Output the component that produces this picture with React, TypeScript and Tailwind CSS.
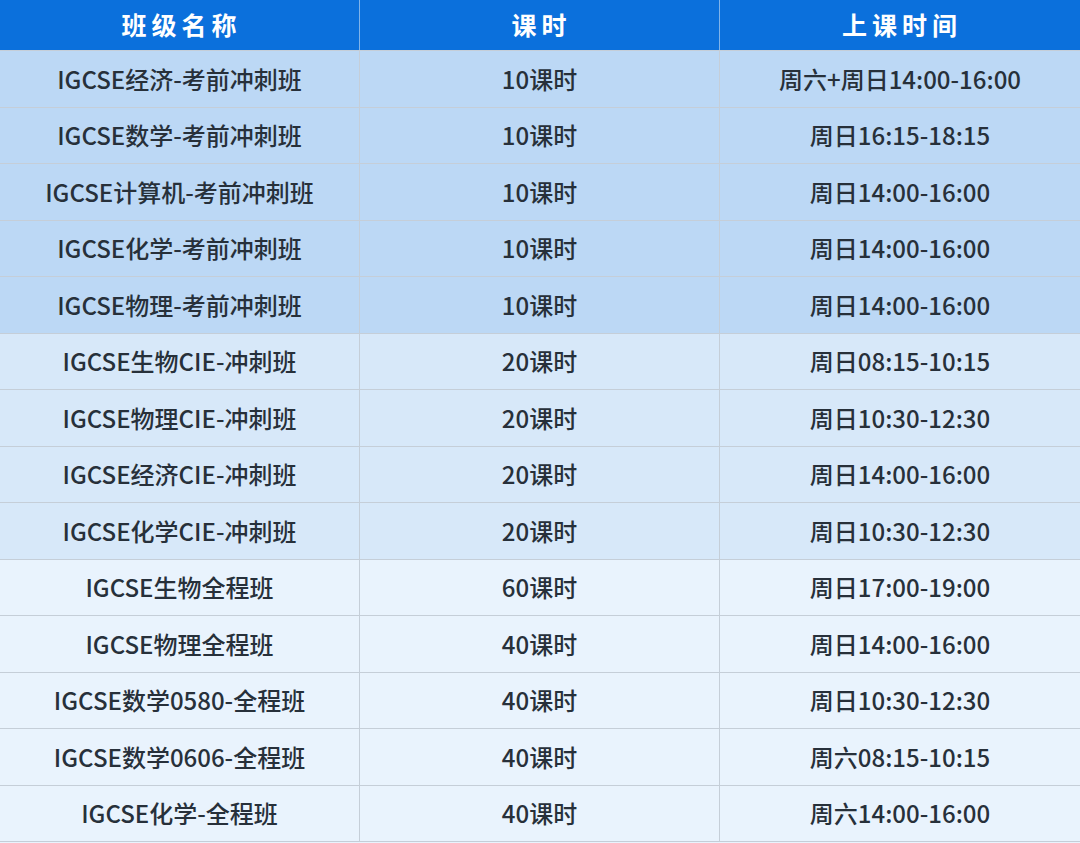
import React from "react";

const rows = [
  { name: "IGCSE经济-考前冲刺班", hours: "10课时", time: "周六+周日14:00-16:00", g: 1 },
  { name: "IGCSE数学-考前冲刺班", hours: "10课时", time: "周日16:15-18:15", g: 1 },
  { name: "IGCSE计算机-考前冲刺班", hours: "10课时", time: "周日14:00-16:00", g: 1 },
  { name: "IGCSE化学-考前冲刺班", hours: "10课时", time: "周日14:00-16:00", g: 1 },
  { name: "IGCSE物理-考前冲刺班", hours: "10课时", time: "周日14:00-16:00", g: 1 },
  { name: "IGCSE生物CIE-冲刺班", hours: "20课时", time: "周日08:15-10:15", g: 2 },
  { name: "IGCSE物理CIE-冲刺班", hours: "20课时", time: "周日10:30-12:30", g: 2 },
  { name: "IGCSE经济CIE-冲刺班", hours: "20课时", time: "周日14:00-16:00", g: 2 },
  { name: "IGCSE化学CIE-冲刺班", hours: "20课时", time: "周日10:30-12:30", g: 2 },
  { name: "IGCSE生物全程班", hours: "60课时", time: "周日17:00-19:00", g: 3 },
  { name: "IGCSE物理全程班", hours: "40课时", time: "周日14:00-16:00", g: 3 },
  { name: "IGCSE数学0580-全程班", hours: "40课时", time: "周日10:30-12:30", g: 3 },
  { name: "IGCSE数学0606-全程班", hours: "40课时", time: "周六08:15-10:15", g: 3 },
  { name: "IGCSE化学-全程班", hours: "40课时", time: "周六14:00-16:00", g: 3 },
];

const groupBg: Record<number, string> = {
  1: "bg-[#bcd8f5]",
  2: "bg-[#d7e8f9]",
  3: "bg-[#e9f3fd]",
};

export default function App() {
  return (
    <div
      className="w-[1080px] h-[843px] overflow-hidden bg-[#e9f3fd] text-[#27303a]"
      style={{ fontFamily: '"Noto Sans CJK SC", "Noto Sans", sans-serif' }}
    >
      <div className="grid grid-cols-3 h-[50px] bg-[#0b70dc] text-white text-[25px] font-bold tracking-[0.2em]">
        <div className="flex items-center justify-center pl-[4px] border-r border-[#7fb3ea]">班级名称</div>
        <div className="flex items-center justify-center pl-[4px] border-r border-[#7fb3ea]">课时</div>
        <div className="flex items-center justify-center pl-[4px]">上课时间</div>
      </div>
      {rows.map((r, i) => (
        <div
          key={i}
          className={`grid grid-cols-3 h-[56.5px] border-t border-[#c5ced8] text-[24px] font-medium ${groupBg[r.g]}`}
        >
          <div className="flex items-center justify-center border-r border-[#c5ced8]">{r.name}</div>
          <div className="flex items-center justify-center border-r border-[#c5ced8]">{r.hours}</div>
          <div className="flex items-center justify-center">{r.time}</div>
        </div>
      ))}
      <div className="border-t border-[#c5ced8]" />
    </div>
  );
}
